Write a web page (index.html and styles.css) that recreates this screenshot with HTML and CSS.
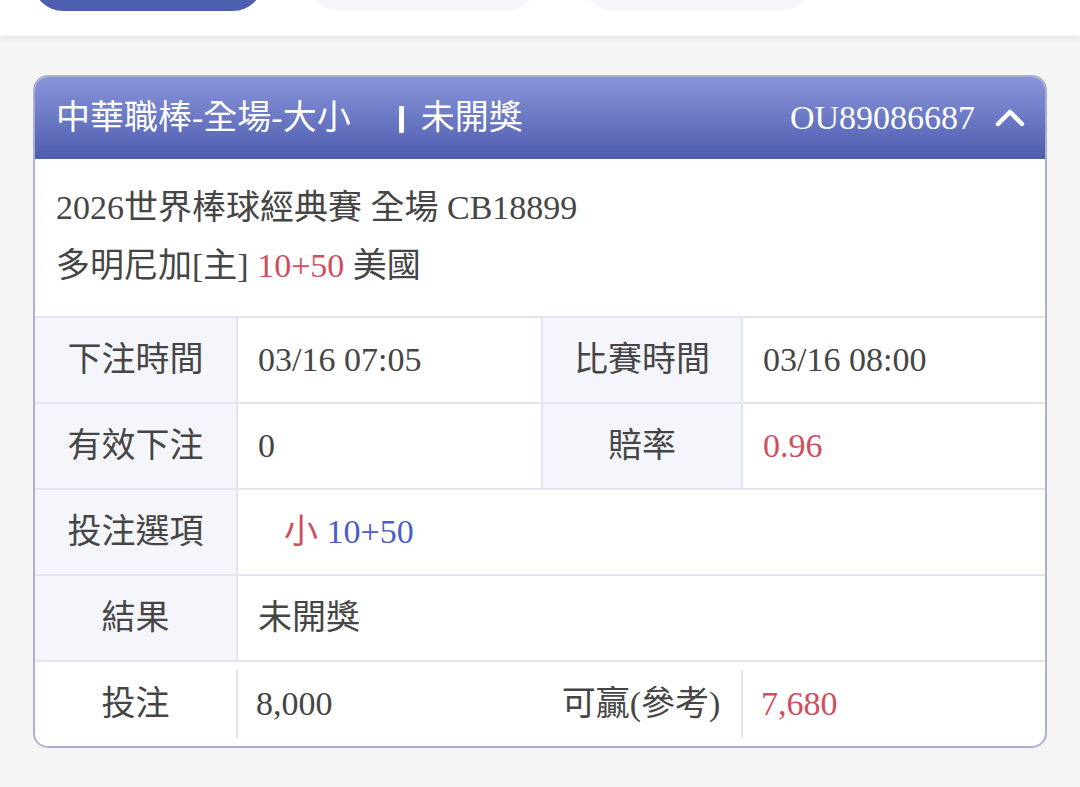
FILE: index.html
```html
<!DOCTYPE html>
<html lang="zh-Hant">
<head>
<meta charset="utf-8">
<title>注單</title>
<link rel="stylesheet" href="styles.css">
</head>
<body>
<div class="topbar">
  <div class="tab tab-active"></div>
  <div class="tab"></div>
  <div class="tab"></div>
</div>
<main class="page">
  <section class="card">
    <header class="card-head">
      <div class="head-left">
        <span class="head-title">中華職棒-全場-大小</span>
        <span class="head-sep"></span>
        <span class="head-status">未開獎</span>
      </div>
      <div class="head-right">
        <span class="head-id">OU89086687</span>
        <svg class="chev" width="30" height="20" viewBox="0 0 30 20" aria-hidden="true"><path d="M3 17 L15 5 L27 17" fill="none" stroke="#fff" stroke-width="4.5" stroke-linecap="round" stroke-linejoin="round"/></svg>
      </div>
    </header>
    <div class="info">
      <div class="info-line">2026世界棒球經典賽 全場 CB18899</div>
      <div class="info-line">多明尼加[主] <span class="red">10+50</span> 美國</div>
    </div>
    <div class="row row-4">
      <div class="cell label">下注時間</div>
      <div class="cell value">03/16 07:05</div>
      <div class="cell label">比賽時間</div>
      <div class="cell value">03/16 08:00</div>
    </div>
    <div class="row row-4">
      <div class="cell label">有效下注</div>
      <div class="cell value">0</div>
      <div class="cell label">賠率</div>
      <div class="cell value red">0.96</div>
    </div>
    <div class="row row-2">
      <div class="cell label">投注選項</div>
      <div class="cell value"><span class="pick-wrap"><span class="pick red">小</span> <span class="blue">10+50</span></span></div>
    </div>
    <div class="row row-2">
      <div class="cell label">結果</div>
      <div class="cell value">未開獎</div>
    </div>
    <div class="row row-4 row-last">
      <div class="cell plain">投注</div>
      <div class="cell value short">8,000</div>
      <div class="cell plain">可贏(參考)</div>
      <div class="cell value short red">7,680</div>
    </div>
  </section>
</main>
</body>
</html>
```
FILE: styles.css
```css
* { box-sizing: border-box; }
html, body { margin: 0; padding: 0; }
body {
  background: #f5f5f6;
  font-family: "Liberation Serif", "Noto Sans CJK TC", serif;
  color: #454545;
  width: 1080px;
  height: 787px;
  overflow: hidden;
}
.topbar {
  height: 36px;
  background: #fff;
  box-shadow: 0 2px 6px rgba(0, 0, 0, 0.07);
  display: flex;
  gap: 46px;
  padding-left: 33px;
  overflow: hidden;
  position: relative;
  z-index: 1;
}
.tab {
  width: 228px;
  height: 60px;
  margin-top: -49px;
  border-radius: 30px;
  background: #f5f6fa;
}
.tab-active { background: #4f5faf; width: 230px; }
.page { padding: 39px 33px 0 33px; }
.card {
  border: 2px solid #abb0d3;
  border-radius: 15px;
  overflow: hidden;
  background: #fff;
}
.card-head {
  height: 82px;
  background: linear-gradient(#8995da, #4e5cae);
  color: #fff;
  display: flex;
  align-items: center;
  justify-content: space-between;
  padding: 0 20px 0 21px;
  font-size: 34px;
}
.head-left { display: flex; align-items: center; }
.head-title, .head-status { line-height: 40px; }
.head-sep {
  width: 5px;
  height: 27px;
  background: #fff;
  margin: 2px 17px 0 48px;
  border-radius: 1px;
}
.head-right { display: flex; align-items: center; gap: 20px; }
.head-id { line-height: 40px; }
.chev { margin-top: -2px; }
.info {
  padding: 20px 21px 21px;
  font-size: 34px;
}
.info-line { line-height: 58px; }
.red { color: #cf4f5f; }
.blue { color: #4a5dc9; }
.row {
  display: grid;
  border-top: 2px solid #e2e4f0;
  height: 86px;
  font-size: 34px;
}
.row-4 { grid-template-columns: 201px 305px 200px 1fr; }
.row-2 { grid-template-columns: 201px 1fr; }
.cell {
  display: flex;
  align-items: center;
  line-height: 40px;
}
.cell + .cell { border-left: 2px solid #e2e4f0; }
.label {
  background: #f5f6fb;
  justify-content: center;
}
.value { padding-left: 20px; }
.pick-wrap { padding-left: 26px; }
.plain { justify-content: center; background: #fff; }
.row-last .cell + .cell { border-left: none; }
.row-last .short {
  position: relative;
}
.row-last .short::before {
  content: "";
  position: absolute;
  left: 0;
  top: 8px;
  bottom: 8px;
  width: 2px;
  background: #e2e4f0;
}
```
